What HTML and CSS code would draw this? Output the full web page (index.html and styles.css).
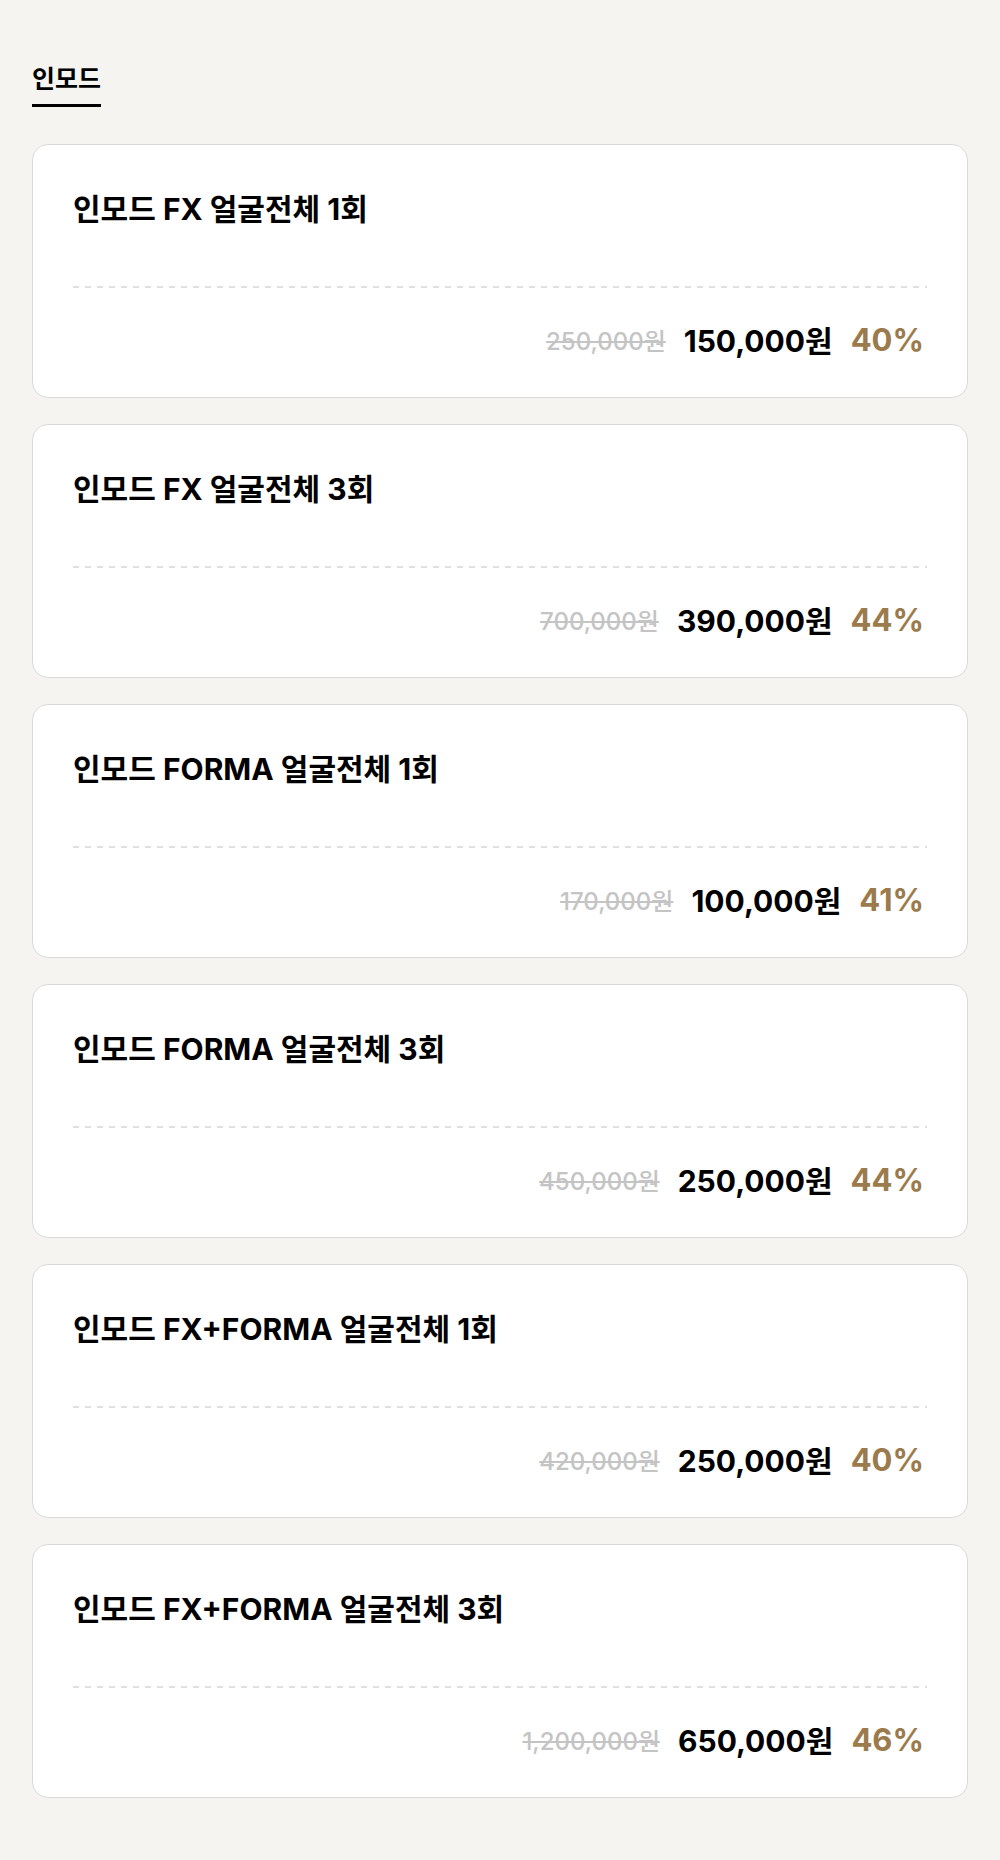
FILE: index.html
```html
<!DOCTYPE html>
<html lang="ko">
<head>
    <meta charset="UTF-8">
    <meta name="viewport" content="width=device-width, initial-scale=1.0">
    <link rel="stylesheet" href="styles.css">
    <title>인모드</title>
</head>
<body>
    <div class="container">
        <div class="tabs">
            <span class="tab active">인모드</span>
        </div>
        <div class="product-list">
            <div class="product-card">
                <h3 class="product-title">인모드 FX 얼굴전체 1회</h3>
                <div class="divider"></div>
                <div class="price-row">
                    <span class="price-original">250,000원</span>
                    <span class="price-sale">150,000원</span>
                    <span class="price-rate">40%</span>
                </div>
            </div>
            <div class="product-card">
                <h3 class="product-title">인모드 FX 얼굴전체 3회</h3>
                <div class="divider"></div>
                <div class="price-row">
                    <span class="price-original">700,000원</span>
                    <span class="price-sale">390,000원</span>
                    <span class="price-rate">44%</span>
                </div>
            </div>
            <div class="product-card">
                <h3 class="product-title">인모드 FORMA 얼굴전체 1회</h3>
                <div class="divider"></div>
                <div class="price-row">
                    <span class="price-original">170,000원</span>
                    <span class="price-sale">100,000원</span>
                    <span class="price-rate">41%</span>
                </div>
            </div>
            <div class="product-card">
                <h3 class="product-title">인모드 FORMA 얼굴전체 3회</h3>
                <div class="divider"></div>
                <div class="price-row">
                    <span class="price-original">450,000원</span>
                    <span class="price-sale">250,000원</span>
                    <span class="price-rate">44%</span>
                </div>
            </div>
            <div class="product-card">
                <h3 class="product-title">인모드 FX+FORMA 얼굴전체 1회</h3>
                <div class="divider"></div>
                <div class="price-row">
                    <span class="price-original">420,000원</span>
                    <span class="price-sale">250,000원</span>
                    <span class="price-rate">40%</span>
                </div>
            </div>
            <div class="product-card">
                <h3 class="product-title">인모드 FX+FORMA 얼굴전체 3회</h3>
                <div class="divider"></div>
                <div class="price-row">
                    <span class="price-original">1,200,000원</span>
                    <span class="price-sale">650,000원</span>
                    <span class="price-rate">46%</span>
                </div>
            </div>
        </div>
    </div>
</body>
</html>
```

FILE: styles.css
```css
body {
    font-family: Inter, "Noto Sans CJK KR", sans-serif;
    margin: 0;
    padding: 0;
    min-height: 100vh;
    background-color: #f5f4f0;
    color: #000000;
}

.container {
    padding: 62px 32px 62px 32px;
}

.tabs {
    display: flex;
    margin-bottom: 37px;
}

.tab {
    font-size: 25px;
    font-weight: 700;
    line-height: 30px;
    padding-top: 2px;
    padding-bottom: 10px;
}

.tab.active {
    border-bottom: 3px solid #000000;
}

.product-list {
    display: flex;
    flex-direction: column;
    gap: 26px;
}

.product-card {
    background-color: #ffffff;
    border: 1px solid #d9d9d9;
    border-radius: 16px;
    padding: 44px 40px 38px 40px;
}

.product-title {
    margin: 0 0 57px 0;
    font-size: 30px;
    font-weight: 700;
    line-height: 40px;
}

.divider {
    height: 2px;
    background: repeating-linear-gradient(to right, #e0e0e0 0 6px, transparent 6px 12px);
}

.price-row {
    display: flex;
    justify-content: flex-end;
    align-items: center;
    gap: 18px;
    margin-top: 31px;
    height: 40px;
    padding-right: 3px;
}

.price-original {
    font-size: 24px;
    font-weight: 500;
    color: #c4c4c4;
    text-decoration: line-through;
}

.price-sale {
    font-size: 30px;
    font-weight: 700;
}

.price-rate {
    font-size: 31px;
    font-weight: 700;
    color: #9b7b4c;
}
```
